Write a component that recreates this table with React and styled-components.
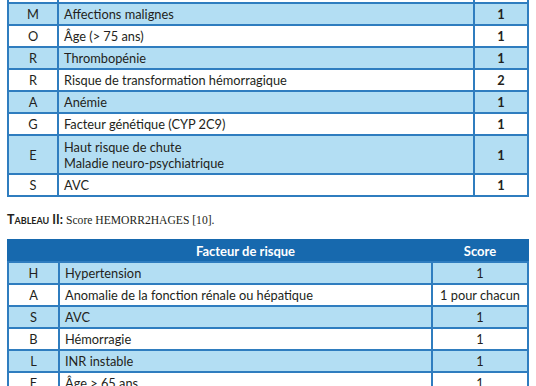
import React from 'react'
import styled, { createGlobalStyle } from 'styled-components'

const GlobalStyle = createGlobalStyle`
  html, body {
    margin: 0;
    padding: 0;
    background: #ffffff;
  }
  body {
    width: 536px;
    height: 386px;
    overflow: hidden;
  }
`

const _colors = {
  border: '#2f7dbf',
  light: '#b3def3',
  header: '#1769ae',
  text: '#231f20',
}

const Page = styled.div`
  width: 536px;
  height: 386px;
  overflow: hidden;
  display: flex;
  flex-direction: column;
  padding-left: 7px;
  box-sizing: border-box;
  font-family: Lato, 'Open Sans', sans-serif;
  color: ${_colors.text};
`

const Table = styled.table`
  width: 522px;
  border-collapse: collapse;
  table-layout: fixed;
  font-size: 12.8px;
  margin-top: ${props => props.offset || 0}px;
`

const Row = styled.tr`
  background: ${props => (props.shaded ? _colors.light : '#ffffff')};
`

const Cell = styled.td`
  border: 2px solid ${_colors.border};
  height: ${props => props.h || 20}px;
  padding: 0 5px;
  line-height: 16px;
  text-align: ${props => (props.center ? 'center' : 'left')};
  font-weight: ${props => (props.bold ? 700 : 400)};
  vertical-align: middle;
  box-sizing: border-box;
`

const HeadCell = styled.th`
  background: ${_colors.header};
  color: #ffffff;
  font-weight: 700;
  font-size: 13px;
  height: 22px;
  padding: 0;
  line-height: 16px;
  text-align: center;
  box-sizing: border-box;
  border-top: 2px solid ${_colors.header};
  border-bottom: 2px solid ${_colors.border};
  border-left: ${props =>
    props.divider ? `2px solid #e6f3fb` : `2px solid ${_colors.header}`};
  border-right: 2px solid ${_colors.header};
`

const Caption = styled.p`
  margin: 16px 0 0;
  height: 14px;
  font-family: 'Liberation Serif', serif;
  font-size: 11.6px;
  line-height: 14px;
  color: #231f20;
`

const CaptionLabel = styled.span`
  font-family: Lato, 'Open Sans', sans-serif;
  font-weight: 700;
  font-variant: small-caps;
  font-size: 12.5px;
`

const firstTable = [
  ['M', 'Affections malignes', '1'],
  ['O', 'Âge (> 75 ans)', '1'],
  ['R', 'Thrombopénie', '1'],
  ['R', 'Risque de transformation hémorragique', '2'],
  ['A', 'Anémie', '1'],
  ['G', 'Facteur génétique (CYP 2C9)', '1'],
  ['E', ['Haut risque de chute', 'Maladie neuro-psychiatrique'], '1'],
  ['S', 'AVC', '1'],
]

const secondTable = [
  ['H', 'Hypertension', '1'],
  ['A', 'Anomalie de la fonction rénale ou hépatique', '1 pour chacun'],
  ['S', 'AVC', '1'],
  ['B', 'Hémorragie', '1'],
  ['L', 'INR instable', '1'],
  ['E', 'Âge > 65 ans', '1'],
]

function Label({ value }) {
  if (Array.isArray(value)) {
    return value.map((line, i) => <div key={i}>{line}</div>)
  }
  return value
}

export default function App() {
  return (
    <Page>
      <GlobalStyle />
      <Table offset={-18}>
        <colgroup>
          <col style={{ width: 50 }} />
          <col />
          <col style={{ width: 54 }} />
        </colgroup>
        <tbody>
          <Row>
            <Cell center />
            <Cell />
            <Cell center />
          </Row>
          {firstTable.map(([letter, label, score], i) => (
            <Row key={i} shaded={i % 2 === 0}>
              <Cell center h={Array.isArray(label) ? 39 : 22}>
                {letter}
              </Cell>
              <Cell>
                <Label value={label} />
              </Cell>
              <Cell center bold>
                {score}
              </Cell>
            </Row>
          ))}
        </tbody>
      </Table>

      <Caption>
        <CaptionLabel>Tableau II: </CaptionLabel>
        Score HEMORR2HAGES [10].
      </Caption>

      <Table offset={12}>
        <colgroup>
          <col style={{ width: 51 }} />
          <col />
          <col style={{ width: 96 }} />
        </colgroup>
        <thead>
          <tr>
            <HeadCell />
            <HeadCell divider>Facteur de risque</HeadCell>
            <HeadCell divider>Score</HeadCell>
          </tr>
        </thead>
        <tbody>
          {secondTable.map(([letter, label, score], i) => (
            <Row key={i} shaded={i % 2 === 0}>
              <Cell center h={22}>
                {letter}
              </Cell>
              <Cell>{label}</Cell>
              <Cell center>{score}</Cell>
            </Row>
          ))}
        </tbody>
      </Table>
    </Page>
  )
}
